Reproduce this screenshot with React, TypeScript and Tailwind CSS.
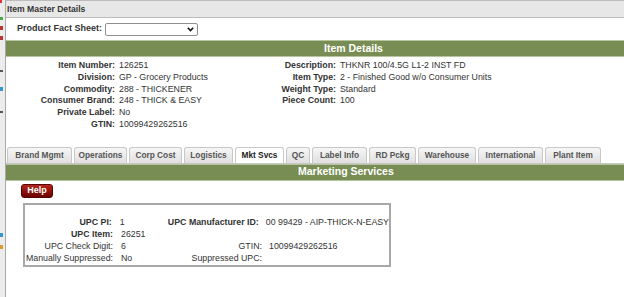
import React, { FC } from "react";

const details: [string, string][] = [
  ["Item Number:", "126251"],
  ["Division:", "GP - Grocery Products"],
  ["Commodity:", "288 - THICKENER"],
  ["Consumer Brand:", "248 - THICK & EASY"],
  ["Private Label:", "No"],
  ["GTIN:", "10099429262516"],
];

const detailsRight: [string, string][] = [
  ["Description:", "THKNR 100/4.5G L1-2 INST FD"],
  ["Item Type:", "2 - Finished Good w/o Consumer Units"],
  ["Weight Type:", "Standard"],
  ["Piece Count:", "100"],
];

const tabs = [
  { label: "Brand Mgmt", w: "w-[65px]" },
  { label: "Operations", w: "w-[53px]" },
  { label: "Corp Cost", w: "w-[53px]" },
  { label: "Logistics", w: "w-[49px]" },
  { label: "Mkt Svcs", w: "w-[49px]", active: true },
  { label: "QC", w: "w-[24px]" },
  { label: "Label Info", w: "w-[55px]" },
  { label: "RD Pckg", w: "w-[47px]" },
  { label: "Warehouse", w: "w-[58px]" },
  { label: "International", w: "w-[65px]" },
  { label: "Plant Item", w: "w-[56px]" },
];

const LeftStrip: FC = () => (
  <div className="w-[5px] flex flex-col bg-[#ececec]">
    <div className="h-[3px] w-[2px] bg-[#d33]" />
    <div className="h-[14px]" />
    <div className="h-[3px] w-[3px] bg-[#4a4]" />
    <div className="h-[6px]" />
    <div className="h-[4px] w-[3px] bg-[#b33]" />
    <div className="h-[6px]" />
    <div className="h-[4px] w-[3px] bg-[#b33]" />
    <div className="h-[30px]" />
    <div className="h-[2px] w-[3px] bg-[#555]" />
    <div className="h-[15px]" />
    <div className="h-[4px] w-[3px] bg-[#39c]" />
    <div className="h-[20px]" />
    <div className="h-[2px] w-[3px] bg-[#555]" />
    <div className="h-[120px]" />
    <div className="h-[4px] w-[3px] bg-[#39c]" />
    <div className="h-[8px]" />
    <div className="h-[4px] w-[3px] bg-[#d93]" />
  </div>
);

const GreenBar: FC<{ title: string; pad: string }> = ({ title, pad }) => (
  <div
    className={`h-[17px] flex items-center bg-[#788d54] border-y border-[#b6c4a0] text-white font-bold text-[10.5px] ${pad}`}
  >
    {title}
  </div>
);

const App: FC = () => {
  return (
    <div className="w-[624px] h-[297px] overflow-hidden flex bg-white text-[#333] font-['Liberation_Sans',Arial,sans-serif] text-[8.8px] whitespace-nowrap">
      <LeftStrip />
      <div className="flex-1 flex flex-col border-l border-[#a9a9a9]">
        <div className="h-[18px] flex items-center pl-[1px] bg-[#e7e7e7] border-y border-[#bcbcbc] font-bold text-[8.6px]">
          Item Master Details
        </div>
        <div className="h-[22px] flex items-center pl-[11px]">
          <span className="font-bold text-[9px]">Product Fact Sheet:</span>
          <div className="ml-[3px] w-[93px] h-[13px] border border-[#8f8f8f] rounded-[2px] flex items-center justify-end pr-[3px]">
            <svg width="7" height="5" viewBox="0 0 7 5">
              <path d="M0.8 0.8 L3.5 3.6 L6.2 0.8" fill="none" stroke="#111" strokeWidth="1.6" />
            </svg>
          </div>
        </div>
        <GreenBar title="Item Details" pad="pl-[318px]" />
        <div className="flex pt-[3px] leading-[11.8px]">
          <div className="flex flex-col">
            {details.map(([l, v]) => (
              <div key={l} className="flex">
                <span className="w-[109px] text-right font-bold">{l}</span>
                <span className="ml-[4px] w-[97px]">{v}</span>
              </div>
            ))}
          </div>
          <div className="flex flex-col">
            {detailsRight.map(([l, v]) => (
              <div key={l} className="flex">
                <span className="w-[120px] text-right font-bold">{l}</span>
                <span className="ml-[4px]">{v}</span>
              </div>
            ))}
          </div>
        </div>
        <div className="mt-[16px] flex gap-[2px] pl-[1px] border-b border-[#c6c6c6]">
          {tabs.map((t) => (
            <div
              key={t.label}
              className={`${t.w} h-[16px] flex items-center justify-center rounded-t-[3px] border border-b-0 border-[#c8c8c8] font-bold text-[8.3px] ${
                t.active ? "bg-white text-[#222]" : "bg-gradient-to-b from-[#f6f6f6] to-[#e0e0e0] text-[#555]"
              }`}
            >
              {t.label}
            </div>
          ))}
        </div>
        <GreenBar title="Marketing Services" pad="pl-[292px]" />
        <div className="mt-[3px] ml-[15px] w-[32px] h-[14px] flex items-center justify-center rounded-[3px] border border-[#5a0000] bg-gradient-to-b from-[#b4261a] to-[#6b0000] text-white font-bold text-[9px]">
          Help
        </div>
        <div className="mt-[5px] ml-[17px] w-[368px] h-[64px] border-2 border-[#a8a8a8] pt-[11px] leading-[12px]">
          <div className="flex">
            <span className="w-[88px] text-right font-bold">UPC PI:</span>
            <span className="ml-[8px] w-[40px]">1</span>
            <span className="w-[101px] text-right font-bold">UPC Manufacturer ID:</span>
            <span className="ml-[7px]">00 99429 - AIP-THICK-N-EASY</span>
          </div>
          <div className="flex">
            <span className="w-[88px] text-right font-bold">UPC Item:</span>
            <span className="ml-[8px] w-[40px]">26251</span>
          </div>
          <div className="flex">
            <span className="w-[88px] text-right">UPC Check Digit:</span>
            <span className="ml-[8px] w-[40px]">6</span>
            <span className="w-[101px] text-right">GTIN:</span>
            <span className="ml-[7px]">10099429262516</span>
          </div>
          <div className="flex">
            <span className="w-[88px] text-right">Manually Suppressed:</span>
            <span className="ml-[8px] w-[40px]">No</span>
            <span className="w-[101px] text-right">Suppressed UPC:</span>
            <span className="ml-[7px]"></span>
          </div>
        </div>
      </div>
    </div>
  );
};

export default App;
